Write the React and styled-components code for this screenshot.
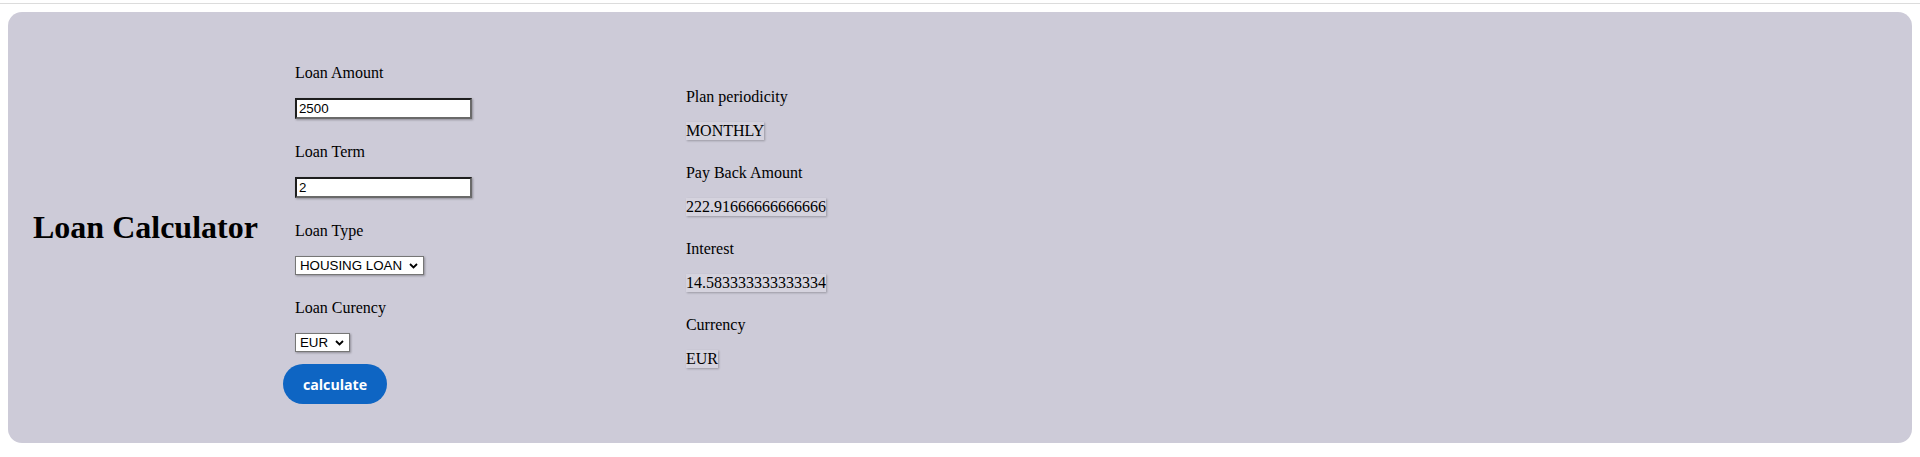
import React from 'react';
import styled, { createGlobalStyle } from 'styled-components';

const GlobalStyle = createGlobalStyle`
  html, body {
    margin: 0;
    padding: 0;
    background: #ffffff;
    font-family: "Liberation Serif", "Times New Roman", serif;
    color: #000;
  }
`

const TopRule = styled.div`
  margin-top: 3px;
  height: 1px;
  background: #dcdcdc;
`

const Panel = styled.div`
  margin: 8px 8px 0;
  padding: 39px 25px;
  background: #cdcbd8;
  border-radius: 14px;
  display: flex;
  align-items: center;
  gap: 25px;
`

const Title = styled.h1`
  margin: 0;
  font-size: 32px;
  font-weight: bold;
  line-height: 37px;
  white-space: nowrap;
`

const Form = styled.form`
  width: 378px;
  padding-top: 13px;
  display: flex;
  flex-direction: column;
  align-items: flex-start;
`

const Field = styled.div`
  padding-left: 12px;
  margin-bottom: ${p => (p.$last ? '0' : '24px')};
`

const Label = styled.label`
  display: block;
  font-size: 16px;
  line-height: 18px;
  margin-bottom: 16px;
`

const TextInput = styled.input`
  display: block;
  box-sizing: border-box;
  width: 177px;
  height: 21px;
  margin: 0;
  padding: 0 2px;
  font-family: "Liberation Sans", Arial, sans-serif;
  font-size: 13.33px;
  color: #000;
  background: #fff;
  border: 2px solid;
  border-color: #1e1e1e #6a6a6a #6a6a6a #1e1e1e;
  box-shadow: 1px 1px 2px rgba(0, 0, 0, 0.3);
  outline: none;
`

const SelectWrap = styled.div`
  position: relative;
  display: inline-block;
`

const Select = styled.select`
  display: block;
  box-sizing: border-box;
  height: 19px;
  margin: 0;
  padding: 0 20px 0 4px;
  appearance: none;
  -webkit-appearance: none;
  font-family: "Liberation Sans", Arial, sans-serif;
  font-size: 13.33px;
  color: #000;
  background: #fff;
  border: 1px solid #767676;
  border-radius: 0;
  box-shadow: 1px 1px 2px rgba(0, 0, 0, 0.3);
  outline: none;
`

const Chevron = styled.svg`
  position: absolute;
  right: 6px;
  top: 7px;
  pointer-events: none;
`

const CalcButton = styled.button`
  margin-top: 12px;
  height: 40px;
  padding: 0 20px;
  border: none;
  border-radius: 20px;
  background: #0e65c3;
  color: #fff;
  font-family: "Open Sans", "Noto Sans", sans-serif;
  font-weight: 700;
  font-size: 14.2px;
  cursor: pointer;
`

const Results = styled.div`
  display: flex;
  flex-direction: column;
  align-items: flex-start;
`

const ResultRow = styled.div`
  margin-bottom: ${p => (p.$last ? '0' : '24px')};
`

const ResultLabel = styled.div`
  font-size: 16px;
  line-height: 18px;
  margin-bottom: 16px;
`

const ResultValue = styled.span`
  display: inline-block;
  font-size: 16px;
  line-height: 18px;
  background: #d5d3de;
  box-shadow: 1px 1px 2px rgba(0, 0, 0, 0.25);
`

const Dropdown = ({ id, options, value }) => (
  <SelectWrap>
    <Select id={id} defaultValue={value}>
      {options.map(o => <option key={o} value={o}>{o}</option>)}
    </Select>
    <Chevron width="9" height="6" viewBox="0 0 9 6">
      <path d="M1 1 L4.5 4.5 L8 1" fill="none" stroke="#000" strokeWidth="1.8" />
    </Chevron>
  </SelectWrap>
)

const results = [
  { label: 'Plan periodicity', value: 'MONTHLY' },
  { label: 'Pay Back Amount', value: '222.91666666666666' },
  { label: 'Interest', value: '14.583333333333334' },
  { label: 'Currency', value: 'EUR' },
]

const App = () => {
  return (
    <>
      <GlobalStyle />
      <TopRule />
      <Panel>
        <Title>Loan Calculator</Title>
        <Form onSubmit={e => e.preventDefault()}>
          <Field>
            <Label htmlFor="amount">Loan Amount</Label>
            <TextInput id="amount" type="text" defaultValue="2500" />
          </Field>
          <Field>
            <Label htmlFor="term">Loan Term</Label>
            <TextInput id="term" type="text" defaultValue="2" />
          </Field>
          <Field>
            <Label htmlFor="type">Loan Type</Label>
            <Dropdown id="type" value="HOUSING LOAN" options={['HOUSING LOAN', 'CAR LOAN', 'CASH LOAN']} />
          </Field>
          <Field $last>
            <Label htmlFor="currency">Loan Curency</Label>
            <Dropdown id="currency" value="EUR" options={['EUR', 'USD']} />
          </Field>
          <CalcButton type="submit">calculate</CalcButton>
        </Form>
        <Results>
          {results.map((r, i) => (
            <ResultRow key={r.label} $last={i === results.length - 1}>
              <ResultLabel>{r.label}</ResultLabel>
              <ResultValue>{r.value}</ResultValue>
            </ResultRow>
          ))}
        </Results>
      </Panel>
    </>
  );
};

export default App;
